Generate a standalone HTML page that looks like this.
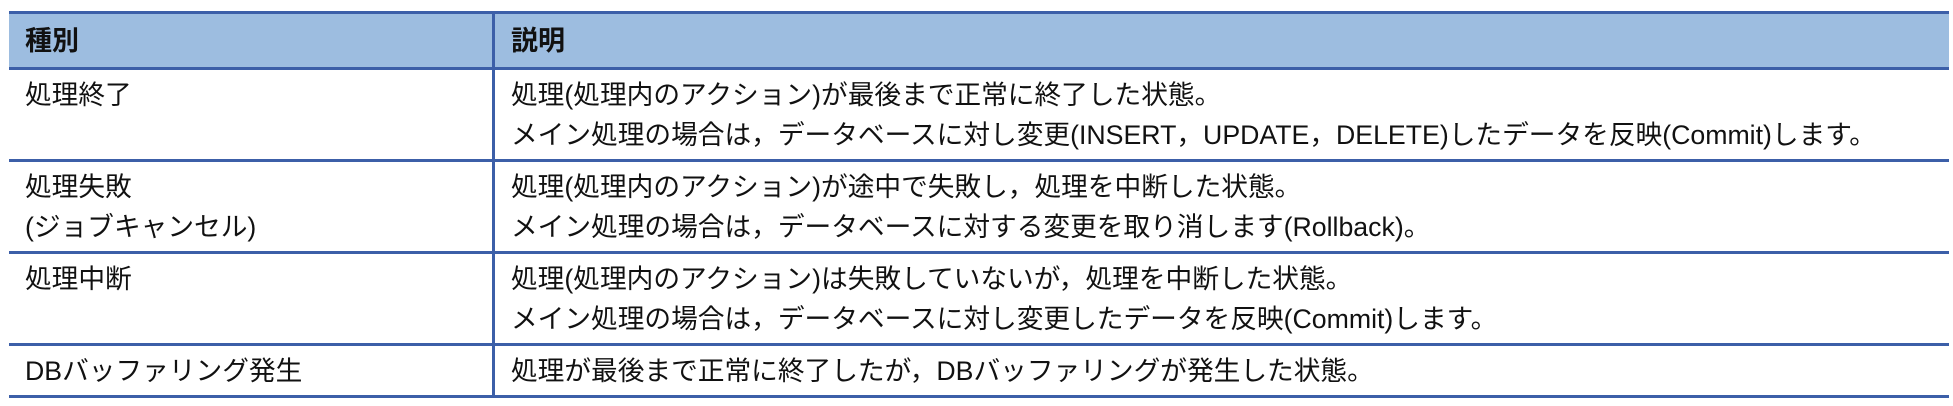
<!DOCTYPE html>
<html><head><meta charset="utf-8"><style>
body{margin:0;background:#fff;width:1953px;height:406px;overflow:hidden;font-family:"Liberation Sans","Noto Sans CJK JP",sans-serif;color:#111;}
table{position:absolute;left:9px;top:11px;width:1940px;border-collapse:collapse;}
td,th{border-top:3px solid #3c5fa8;border-bottom:3px solid #3c5fa8;padding:0 0 0 16px;text-align:left;vertical-align:top;font-size:26.7px;line-height:40px;}
td+td,th+th{border-left:3px solid #3c5fa8;}
th{background:#9dbde0;height:53px;vertical-align:middle;font-weight:bold;font-size:27px;}
td{padding-top:5px;}
.r2 td{height:84px;}
.r1 td{height:44px;}
</style></head><body>
<table>
<tr><th style="width:467px">種別</th><th>説明</th></tr>
<tr class="r2"><td>処理終了</td><td>処理(処理内のアクション)が最後まで正常に終了した状態。<br>メイン処理の場合は，データベースに対し変更(INSERT，UPDATE，DELETE)したデータを反映(Commit)します。</td></tr>
<tr class="r2"><td>処理失敗<br>(ジョブキャンセル)</td><td>処理(処理内のアクション)が途中で失敗し，処理を中断した状態。<br>メイン処理の場合は，データベースに対する変更を取り消します(Rollback)。</td></tr>
<tr class="r2"><td>処理中断</td><td>処理(処理内のアクション)は失敗していないが，処理を中断した状態。<br>メイン処理の場合は，データベースに対し変更したデータを反映(Commit)します。</td></tr>
<tr class="r1"><td>DBバッファリング発生</td><td>処理が最後まで正常に終了したが，DBバッファリングが発生した状態。</td></tr>
</table>
</body></html>
